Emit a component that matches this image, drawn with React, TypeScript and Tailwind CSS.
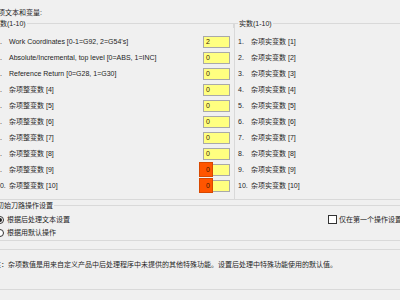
import type { ReactNode } from 'react'

const intRows = [
  'Work Coordinates [0-1=G92, 2=G54\'s]',
  'Absolute/Incremental, top level [0=ABS, 1=INC]',
  'Reference Return [0=G28, 1=G30]',
  '杂项整变数 [4]',
  '杂项整变数 [5]',
  '杂项整变数 [6]',
  '杂项整变数 [7]',
  '杂项整变数 [8]',
  '杂项整变数 [9]',
  '杂项整变数 [10]',
]
const intValues = ['2', '0', '0', '0', '0', '0', '0', '0', '0', '0']

function Group({
  label,
  pre = 'w-[4px]',
  className = '',
  bodyClass = '',
  children,
}: {
  label?: string
  pre?: string
  className?: string
  bodyClass?: string
  children: ReactNode
}) {
  return (
    <div className={`flex flex-col ${className}`}>
      <div className="flex h-[9px] items-start">
        <span className={`mt-[4px] h-[5px] border-l border-t border-[#d9d9d9] ${pre}`} />
        {label && <span className="px-[1px] leading-[9px]">{label}</span>}
        <span className="mt-[4px] h-[5px] flex-1 border-r border-t border-[#d9d9d9]" />
      </div>
      <div className={`flex-1 border-x border-b border-[#d9d9d9] ${bodyClass}`}>{children}</div>
    </div>
  )
}

function Field({ value, flagged }: { value: string; flagged?: boolean }) {
  return (
    <div className="relative mt-[2px] h-[12px] w-[27px] border border-[#a9a9a9] bg-[#ffff80] text-[7px] leading-[10px]">
      {flagged && (
        <div className="absolute left-[-5px] top-[-3px] h-[15px] w-[14px] border border-[#d84800] bg-[#ff5500]" />
      )}
      <span className="relative pl-[2px] text-[#3a1a00]">{value}</span>
    </div>
  )
}

export default function App() {
  return (
    <div className="h-[300px] w-[400px] overflow-hidden bg-[#f0f0f0] font-['Liberation_Sans','Noto_Sans_CJK_SC',sans-serif] text-[7px] leading-[9px] text-[#1e1e1e]">
      <div className="ml-[-12px] w-[424px]">
        <div className="h-[19px] pl-[3px] pt-[8px]">杂项文本和变量:</div>

        <div className="flex h-[181px]">
          <Group label="整数(1-10)" className="w-[246px]" bodyClass="border-r-0 pt-[5px] pl-[7px] pr-[4px]">
            {intRows.map((t, i) => (
              <div key={t} className="flex h-[16px] items-center">
                <span className="w-[13px]">{i + 1}.</span>
                <span className="flex-1">{t}</span>
                <Field value={intValues[i]} flagged={i >= 8} />
              </div>
            ))}
          </Group>
          <Group label="实数(1-10)" className="flex-1" bodyClass="pt-[5px] pl-[3px]">
            {Array.from({ length: 10 }, (_, i) => (
              <div key={i} className="flex h-[16px] items-center">
                <span className="w-[13px]">{i + 1}.</span>
                <span>杂项实变数 [{i + 1}]</span>
              </div>
            ))}
          </Group>
        </div>

        <Group label="初始刀路操作设置" pre="w-[8px]" className="mt-[1px] h-[40px]" bodyClass="pt-[3px]">
          <div className="flex h-[13px] items-center">
            <div className="flex flex-1 items-center pl-[7px]">
              <span className="mr-[3px] flex h-[8px] w-[8px] items-center justify-center rounded-full border border-[#333] bg-white">
                <span className="h-[4px] w-[4px] rounded-full bg-[#222]" />
              </span>
              根据后处理文本设置
            </div>
            <div className="flex w-[83px] items-center">
              <span className="mr-[2px] h-[9px] w-[9px] border border-[#333] bg-white" />
              仅在第一个操作设置
            </div>
          </div>
          <div className="flex h-[13px] items-center pl-[7px]">
            <span className="mr-[3px] h-[8px] w-[8px] rounded-full border border-[#333] bg-white" />
            根据用默认操作
          </div>
        </Group>

        <div className="mt-[8px] h-[41px] border border-[#d9d9d9] pl-[5px] pt-[10px]">
          注：杂项数值是用来自定义产品中后处理程序中未提供的其他特殊功能。设置后处理中特殊功能使用的默认值。
        </div>
      </div>
    </div>
  )
}
